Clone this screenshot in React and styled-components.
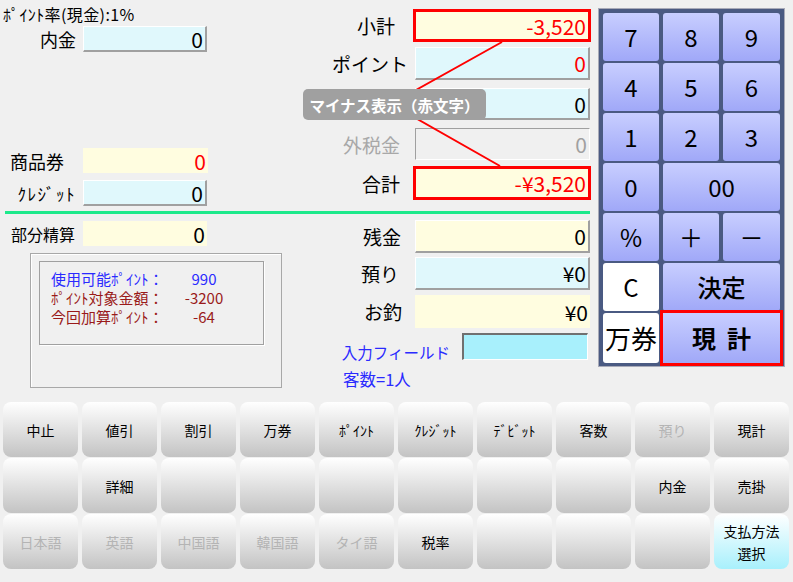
import React from "react";
import styled, { createGlobalStyle, css } from "styled-components";

const GlobalStyle = createGlobalStyle`
  body {
    margin: 0;
    background: #f0f0f0;
    font-family: "Noto Sans CJK JP", "Noto Sans", sans-serif;
  }
`;

const Screen = styled.div`
  width: 793px;
  height: 582px;
  overflow: hidden;
  background: #f0f0f0;
  display: flex;
  flex-direction: column;
`;

const Top = styled.div`
  display: flex;
  height: 402px;
  flex-shrink: 0;
`;

const Main = styled.div`
  position: relative;
  width: 598px;
  display: flex;
  flex-direction: column;
`;

const Section = styled.div`
  display: flex;
  height: ${(p) => p.$h}px;
`;

const Column = styled.div`
  width: ${(p) => p.$w}px;
  display: flex;
  flex-direction: column;
`;

const GreenLine = styled.div`
  height: 3px;
  margin: 0 8px 0 5px;
  background: #1de98b;
`;

const Title = styled.div`
  height: 26px;
  box-sizing: border-box;
  padding: 4px 0 0 3px;
  font-size: 16px;
  letter-spacing: 0.4px;
  line-height: 21px;
  color: #000;
  white-space: nowrap;
`;

const Row = styled.div`
  display: flex;
  align-items: center;
  height: ${(p) => p.$h}px;
  margin-top: ${(p) => p.$mt || 0}px;
  flex-shrink: 0;
`;

const Label = styled.div`
  width: ${(p) => p.$w}px;
  box-sizing: border-box;
  padding-right: ${(p) => p.$pr || 0}px;
  text-align: right;
  font-size: ${(p) => p.$size || 18}px;
  letter-spacing: ${(p) => p.$ls || 0}px;
  color: ${(p) => p.$color || "#000"};
  white-space: nowrap;
  flex-shrink: 0;
`;

const variants = {
  raised: css`
    border-top: 1px solid #ffffff;
    border-left: 1px solid #ffffff;
    border-right: 2px solid #a0a0a0;
    border-bottom: 2px solid #a0a0a0;
  `,
  flat: css`
    border: none;
  `,
  sunken: css`
    border-top: 1px solid #a0a0a0;
    border-left: 1px solid #a0a0a0;
    border-right: 1px solid #ffffff;
    border-bottom: 1px solid #ffffff;
  `,
  red: css`
    border: 3px solid #ff0000;
    margin-left: -2px;
  `,
  input: css`
    border-top: 2px solid #707070;
    border-left: 2px solid #707070;
    border-right: 1px solid #ffffff;
    border-bottom: 1px solid #ffffff;
  `,
};

const Field = styled.div`
  box-sizing: border-box;
  width: ${(p) => p.$w}px;
  height: 100%;
  display: flex;
  align-items: center;
  justify-content: flex-end;
  padding-right: 2px;
  font-size: 21px;
  background: ${(p) => p.$bg};
  color: ${(p) => p.$color || "#000"};
  ${(p) => variants[p.$variant || "raised"]}
`;

const YELLOW = "#fffde0";
const CYAN = "#e0f8fc";

const PointBox = styled.div`
  margin: 7px 0 0 30px;
  width: 252px;
  height: 135px;
  box-sizing: border-box;
  border: 1px solid #a8a8a8;
  box-shadow: inset 1px 1px 0 #ffffff;
`;

const PointInner = styled.div`
  margin: 7px 0 0 8px;
  width: 225px;
  height: 84px;
  box-sizing: border-box;
  border: 1px solid #a0a0a0;
  box-shadow: 1px 1px 0 #ffffff;
  padding: 7px 0 0 11px;
  display: grid;
  grid-template-columns: 120px 66px;
  grid-auto-rows: 19px;
  font-size: 15px;
  line-height: 19px;
`;

const PointText = styled.div`
  color: ${(p) => p.$color};
  text-align: ${(p) => (p.$center ? "center" : "left")};
  white-space: nowrap;
`;

const InputLabel = styled.div`
  width: 172px;
  box-sizing: border-box;
  padding: 10px 12px 0 0;
  text-align: right;
  font-size: 15.5px;
  color: #2a2aff;
  white-space: nowrap;
`;

const CountText = styled.div`
  margin: 7px 0 0 53px;
  font-size: 16.5px;
  color: #2a2aff;
`;

const Callout = styled.svg`
  position: absolute;
  left: 0;
  top: 0;
  pointer-events: none;
  z-index: 1;
`;

const Tip = styled.div`
  position: absolute;
  left: 303px;
  top: 89px;
  width: 183px;
  height: 31px;
  border-radius: 5px;
  background: #a0a0a0;
  color: #ffffff;
  font-size: 15.5px;
  font-weight: 700;
  display: flex;
  align-items: center;
  justify-content: center;
  z-index: 2;
`;

const Keypad = styled.div`
  margin-top: 8px;
  align-self: flex-start;
  width: 187px;
  box-sizing: border-box;
  border: 1px solid #a8aab8;
  background: #4a5a82;
  padding: 4px 4px 3px 4px;
  display: grid;
  grid-template-columns: 56px 56px 57px;
  grid-template-rows: repeat(6, 48px) 50px;
  column-gap: 4px;
  row-gap: 2px;
`;

const Key = styled.button`
  grid-column: span ${(p) => p.$span || 1};
  margin: 0;
  padding: 0;
  border: none;
  border-radius: ${(p) => (p.$hot ? 0 : 3)}px;
  background: ${(p) =>
    p.$white ? "#ffffff" : "linear-gradient(#c8ceff, #a0a8f8)"};
  font-family: inherit;
  font-size: ${(p) => p.$size || 24}px;
  font-weight: ${(p) => p.$weight || 400};
  color: #000;
  outline: ${(p) => (p.$hot ? "3px solid #ff0000" : "none")};
  white-space: pre;
  line-height: 1;
`;

const ButtonGrid = styled.div`
  display: grid;
  grid-template-columns: repeat(10, 75px);
  grid-template-rows: repeat(3, 55px);
  column-gap: 4px;
  row-gap: 1px;
  padding-left: 3px;
`;

const PadButton = styled.button`
  margin: 0;
  padding: 0;
  border: none;
  border-radius: 8px;
  background: ${(p) =>
    p.$cyan
      ? "linear-gradient(#ffffff, #a8f0fc)"
      : "linear-gradient(#ffffff, #c3c3c3)"};
  font-family: inherit;
  font-size: 14px;
  line-height: 22px;
  color: ${(p) => (p.$disabled ? "#b4b4b4" : "#000")};
`;

const buttons = [
  ["中止"], ["値引"], ["割引"], ["万券"], ["ﾎﾟｲﾝﾄ"], ["ｸﾚｼﾞｯﾄ"], ["ﾃﾞﾋﾞｯﾄ"], ["客数"], ["預り", "dis"], ["現計"],
  [""], ["詳細"], [""], [""], [""], [""], [""], [""], ["内金"], ["売掛"],
  ["日本語", "dis"], ["英語", "dis"], ["中国語", "dis"], ["韓国語", "dis"], ["タイ語", "dis"], ["税率"], [""], [""], [""], ["支払方法\n選択", "cyan"],
];

const App = () => {
  return (
    <Screen>
      <GlobalStyle />
      <Top>
        <Main>
          <Section $h={211}>
            <Column $w={290}>
              <Title>ﾎﾟｲﾝﾄ率(現金):1%</Title>
              <Row $h={26}>
                <Label $w={83} $pr={7}>内金</Label>
                <Field $w={124} $bg={CYAN}>0</Field>
              </Row>
              <Row $h={25} $mt={96}>
                <Label $w={83} $pr={19}>商品券</Label>
                <Field $w={125} $bg={YELLOW} $color="#ff0000" $variant="flat">0</Field>
              </Row>
              <Row $h={26} $mt={7}>
                <Label $w={83} $pr={7} $size={17} $ls={1.5}>ｸﾚｼﾞｯﾄ</Label>
                <Field $w={124} $bg={CYAN}>0</Field>
              </Row>
            </Column>
            <Column $w={308}>
              <Row $h={33} $mt={9}>
                <Label $w={125} $pr={20} $size={19}>小計</Label>
                <Field $w={178} $bg={YELLOW} $color="#ff0000" $variant="red">-3,520</Field>
              </Row>
              <Row $h={33} $mt={5}>
                <Label $w={125} $pr={7} $size={19}>ポイント</Label>
                <Field $w={175} $bg={CYAN} $color="#ff0000">0</Field>
              </Row>
              <Row $h={32} $mt={8}>
                <Label $w={125} $size={19}></Label>
                <Field $w={175} $bg={CYAN}>0</Field>
              </Row>
              <Row $h={32} $mt={8}>
                <Label $w={125} $pr={15} $size={19} $color="#a8a8a8">外税金</Label>
                <Field $w={175} $bg="#f0f0f0" $color="#a0a0a0" $variant="sunken">0</Field>
              </Row>
              <Row $h={34} $mt={6}>
                <Label $w={125} $pr={15} $size={19}>合計</Label>
                <Field $w={178} $bg={YELLOW} $color="#ff0000" $variant="red">-¥3,520</Field>
              </Row>
            </Column>
          </Section>
          <GreenLine />
          <Section $h={188}>
            <Column $w={290}>
              <Row $h={25} $mt={7}>
                <Label $w={83} $pr={8} $size={16}>部分精算</Label>
                <Field $w={124} $bg={YELLOW} $variant="flat">0</Field>
              </Row>
              <PointBox>
                <PointInner>
                  <PointText $color="#2a2aff">使用可能ﾎﾟｲﾝﾄ：</PointText>
                  <PointText $color="#2a2aff" $center>990</PointText>
                  <PointText $color="#9a1a1a">ﾎﾟｲﾝﾄ対象金額：</PointText>
                  <PointText $color="#9a1a1a" $center>-3200</PointText>
                  <PointText $color="#9a1a1a">今回加算ﾎﾟｲﾝﾄ：</PointText>
                  <PointText $color="#9a1a1a" $center>-64</PointText>
                </PointInner>
              </PointBox>
            </Column>
            <Column $w={308}>
              <Row $h={33} $mt={6}>
                <Label $w={125} $pr={14} $size={19}>残金</Label>
                <Field $w={175} $bg={YELLOW}>0</Field>
              </Row>
              <Row $h={33} $mt={4}>
                <Label $w={125} $pr={16} $size={19}>預り</Label>
                <Field $w={175} $bg={CYAN}>¥0</Field>
              </Row>
              <Row $h={33} $mt={5}>
                <Label $w={125} $pr={13} $size={19}>お釣</Label>
                <Field $w={175} $bg={YELLOW} $variant="flat">¥0</Field>
              </Row>
              <Row $h={27} $mt={5}>
                <InputLabel>入力フィールド</InputLabel>
                <Field $w={126} $bg="#a8f0fc" $variant="input" />
              </Row>
              <CountText>客数=1人</CountText>
            </Column>
          </Section>
          <Callout width="598" height="211" viewBox="0 0 598 211">
            <polyline
              points="502,42 391,104 500,166"
              fill="none"
              stroke="#ff0000"
              strokeWidth="2"
            />
          </Callout>
          <Tip>マイナス表示（赤文字）</Tip>
        </Main>
        <Keypad>
          <Key>7</Key>
          <Key>8</Key>
          <Key>9</Key>
          <Key>4</Key>
          <Key>5</Key>
          <Key>6</Key>
          <Key>1</Key>
          <Key>2</Key>
          <Key>3</Key>
          <Key>0</Key>
          <Key $span={2}>00</Key>
          <Key>%</Key>
          <Key>＋</Key>
          <Key>－</Key>
          <Key $white>C</Key>
          <Key $span={2} $weight={500}>決定</Key>
          <Key $white $size={26}>万券</Key>
          <Key $span={2} $hot $weight={700}>現  計</Key>
        </Keypad>
      </Top>
      <ButtonGrid>
        {buttons.map(([text, mode], i) => (
          <PadButton key={i} $disabled={mode === "dis"} $cyan={mode === "cyan"}>
            {text.split("\n").map((line, j) => (
              <div key={j}>{line}</div>
            ))}
          </PadButton>
        ))}
      </ButtonGrid>
    </Screen>
  );
};

export default App;
